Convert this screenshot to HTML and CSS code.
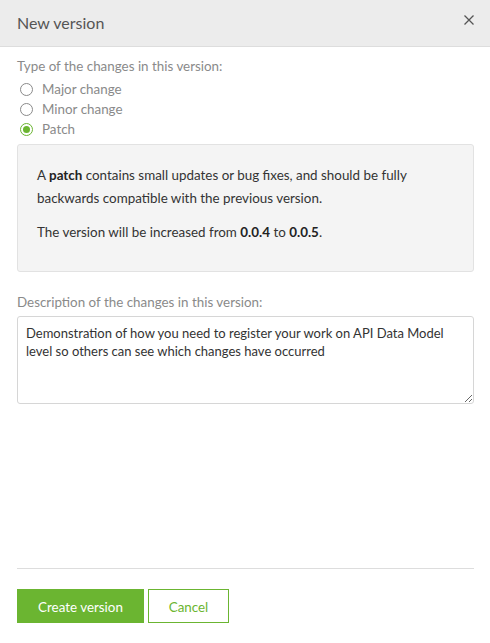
FILE: index.html
```html
<!DOCTYPE html>
<html lang="en">
<head>
<meta charset="utf-8">
<title>New version</title>
<link rel="stylesheet" href="styles.css">
</head>
<body>
<div class="modal">
  <div class="modal-header">
    <h1 class="modal-title">New version</h1>
    <button class="close-btn" aria-label="Close">
      <svg width="10" height="10" viewBox="0 0 10 10"><path d="M0.5 0.5 L9.5 9.5 M9.5 0.5 L0.5 9.5" stroke="#555" stroke-width="1.3" fill="none"/></svg>
    </button>
  </div>
  <div class="modal-body">
    <div class="field-label first">Type of the changes in this version:</div>
    <label class="radio-row"><input type="radio" name="type" class="radio"><span>Major change</span></label>
    <label class="radio-row"><input type="radio" name="type" class="radio"><span>Minor change</span></label>
    <label class="radio-row"><input type="radio" name="type" class="radio" checked><span>Patch</span></label>
    <div class="info-box">
      <p class="info-p1">A <b>patch</b> contains small updates or bug fixes, and should be fully backwards compatible with the previous version.</p>
      <p class="info-p2">The version will be increased from <b>0.0.4</b> to <b>0.0.5</b>.</p>
    </div>
    <div class="field-label desc">Description of the changes in this version:</div>
    <textarea class="desc-input">Demonstration of how you need to register your work on API Data Model level so others can see which changes have occurred</textarea>
  </div>
  <div class="modal-footer">
    <button class="btn btn-primary">Create version</button>
    <button class="btn btn-secondary">Cancel</button>
  </div>
</div>
</body>
</html>
```
FILE: styles.css
```css
html, body {
  margin: 0;
  padding: 0;
  background: #fff;
}
body {
  font-family: "Lato", "Open Sans", sans-serif;
  font-size: 13.4px;
  color: #333;
}
.modal {
  width: 490px;
  height: 643px;
  display: flex;
  flex-direction: column;
  box-sizing: border-box;
}
.modal-header {
  height: 47px;
  box-sizing: border-box;
  background: #ececec;
  border-bottom: 1px solid #dddddd;
  display: flex;
  align-items: center;
  justify-content: space-between;
  padding: 0 16px 2px 17px;
}
.modal-title {
  margin: 0;
  font-size: 16px;
  font-weight: normal;
  color: #555;
}
.close-btn {
  border: 0;
  background: none;
  padding: 0;
  width: 10px;
  height: 10px;
  display: flex;
  margin-top: -4px;
}
.modal-body {
  flex: 1;
  padding: 9px 16px 0 17px;
  display: flex;
  flex-direction: column;
}
.field-label {
  color: #8a8a8a;
  line-height: 20px;
}
.field-label.first {
  margin-bottom: 3px;
}
.field-label.desc {
  margin-top: 20px;
  margin-bottom: 4px;
}
.radio-row {
  display: flex;
  align-items: center;
  height: 20px;
  color: #8a8a8a;
}
.radio {
  appearance: none;
  -webkit-appearance: none;
  margin: 0 9px 0 3px;
  width: 13px;
  height: 13px;
  border: 1px solid #8a8a8a;
  border-radius: 50%;
  box-sizing: border-box;
  display: flex;
  align-items: center;
  justify-content: center;
}
.radio:checked {
  border-color: #6bb531;
}
.radio:checked::after {
  content: "";
  width: 7px;
  height: 7px;
  border-radius: 50%;
  background: #6bb531;
}
.info-box {
  margin-top: 5px;
  height: 128px;
  box-sizing: border-box;
  background: #f4f4f4;
  border: 1px solid #e2e2e2;
  border-radius: 3px;
  padding: 19px 20px 0 19px;
}
.info-box p {
  margin: 0;
  line-height: 23px;
}
.info-p2 {
  margin-top: 11px !important;
}
.info-box b {
  font-weight: bold;
  color: #222;
}
.desc-input {
  height: 88px;
  box-sizing: border-box;
  border: 1px solid #d6d6d6;
  border-radius: 3px;
  padding: 7px 8px;
  font-family: inherit;
  font-size: 13px;
  line-height: 18px;
  color: #333;
  margin: 0;
  resize: vertical;
}
.modal-footer {
  margin: 0 16px 0 17px;
  border-top: 1px solid #dddddd;
  padding: 20px 0;
  display: flex;
  gap: 4px;
}
.btn {
  height: 34px;
  font-family: inherit;
  font-size: 13.4px;
  cursor: pointer;
  box-sizing: border-box;
  padding-top: 2px;
}
.btn-primary {
  width: 127px;
  background: #6bb531;
  border: 1px solid #6bb531;
  color: #fff;
}
.btn-secondary {
  width: 81px;
  background: #fff;
  border: 1px solid #6bb531;
  color: #6bb531;
}
```
